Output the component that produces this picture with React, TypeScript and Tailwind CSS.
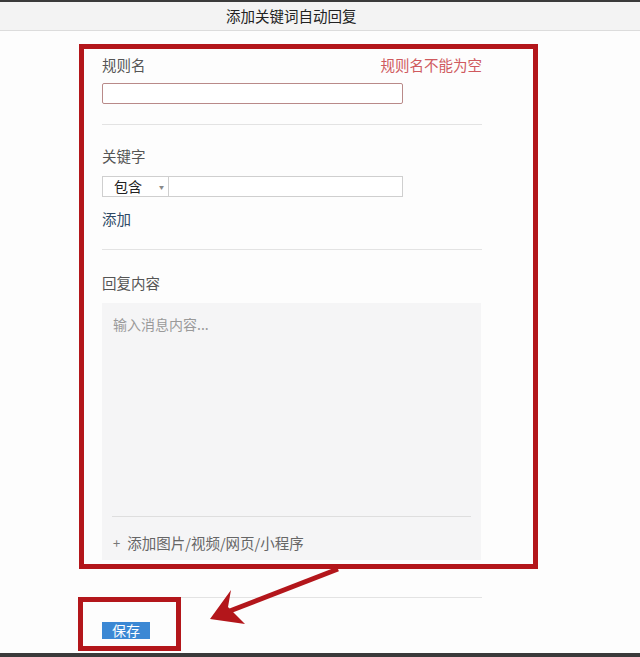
import { useState } from 'react';

const font = { fontFamily: '"Microsoft YaHei", "Noto Sans CJK SC", sans-serif' };

export default function App() {
  const [name, setName] = useState('');
  const [keyword, setKeyword] = useState('');
  const [content, setContent] = useState('');

  return (
    <div className="relative h-[657px] w-[640px] overflow-hidden bg-[#fdfdfd] text-[#555]" style={font}>
      {/* window title */}
      <div className="border-t-2 border-[#3a3a3a]">
        <div className="flex h-[29px] items-center border-b border-[#dcdcdc] bg-[#f3f3f3] pl-[226px] text-[14.5px] text-[#222]">
          添加关键词自动回复
        </div>
      </div>

      <div className="ml-[102px] w-[380px]">
        <div className="mt-[26px] flex items-center justify-between text-[14.5px] leading-[16px]">
          <span>规则名</span>
          <span className="text-[#cf5a5e]">规则名不能为空</span>
        </div>
        <input
          value={name}
          onChange={e => setName(e.target.value)}
          className="mt-[10px] block h-[21px] w-[301px] rounded-[2px] border border-[#b98a89] bg-white px-2 text-[13px] outline-none"
        />
        <div className="mt-[20px] h-px bg-[#e3e3e3]" />

        <div className="mt-[23px] text-[14.5px] leading-[16px]">关键字</div>
        <div className="mt-[12px] flex h-[21px] w-[301px] border border-[#cfcfcf] bg-white">
          <div className="flex w-[66px] items-center border-r border-[#cfcfcf] pl-[11px] text-[14px] text-[#222]">
            包含
            <span className="ml-[17px] text-[5px] text-[#888]">▼</span>
          </div>
          <input
            value={keyword}
            onChange={e => setKeyword(e.target.value)}
            className="flex-1 bg-white px-2 text-[13px] outline-none"
          />
        </div>
        <div className="mt-[14px] text-[14.5px] leading-[16px] text-[#2e4a66]">添加</div>
        <div className="mt-[22px] h-px bg-[#e3e3e3]" />

        <div className="mt-[25px] text-[14.5px] leading-[16px]">回复内容</div>
        <div className="mt-[12px] flex h-[257px] w-[379px] flex-col bg-[#f5f5f6]">
          <textarea
            value={content}
            onChange={e => setContent(e.target.value)}
            placeholder="输入消息内容..."
            className="flex-1 resize-none bg-transparent px-[11px] pt-[13px] text-[14px] leading-[16px] text-[#333] outline-none placeholder:text-[#9a9a9a]"
          />
          <div className="mx-[10px] h-px bg-[#dedede]" />
          <div className="flex h-[43px] items-center pl-[11px] pt-[9px] text-[14.5px] text-[#666]">
            <span className="mr-[7px] text-[13px] text-[#777]">+</span>添加图片/视频/网页/小程序
          </div>
        </div>
      </div>

      <div className="ml-[80px] mt-[37px] h-px w-[402px] bg-[#e3e3e3]" />
      <div className="ml-[102px] mt-[24px]">
        <button className="flex h-[17px] w-[48px] items-center justify-center bg-[#3b88d4] text-[14px] text-white">
          保存
        </button>
      </div>

      <div className="absolute bottom-0 left-0 h-[4px] w-full bg-[#3a3a3a]" />

      {/* annotation overlays */}
      <div className="pointer-events-none absolute left-[79px] top-[44px] h-[525px] w-[459px] border-[5px] border-[#b3161b]" />
      <div className="pointer-events-none absolute left-[78px] top-[597px] h-[54px] w-[103px] border-[5px] border-[#b3161b]" />
      <svg className="pointer-events-none absolute left-0 top-0" width="640" height="657">
        <line x1="338" y1="569" x2="222" y2="614" stroke="#b3161b" strokeWidth="5" />
        <polygon points="210,619 231,590 228,607 245,624" fill="#b3161b" />
      </svg>
    </div>
  );
}
